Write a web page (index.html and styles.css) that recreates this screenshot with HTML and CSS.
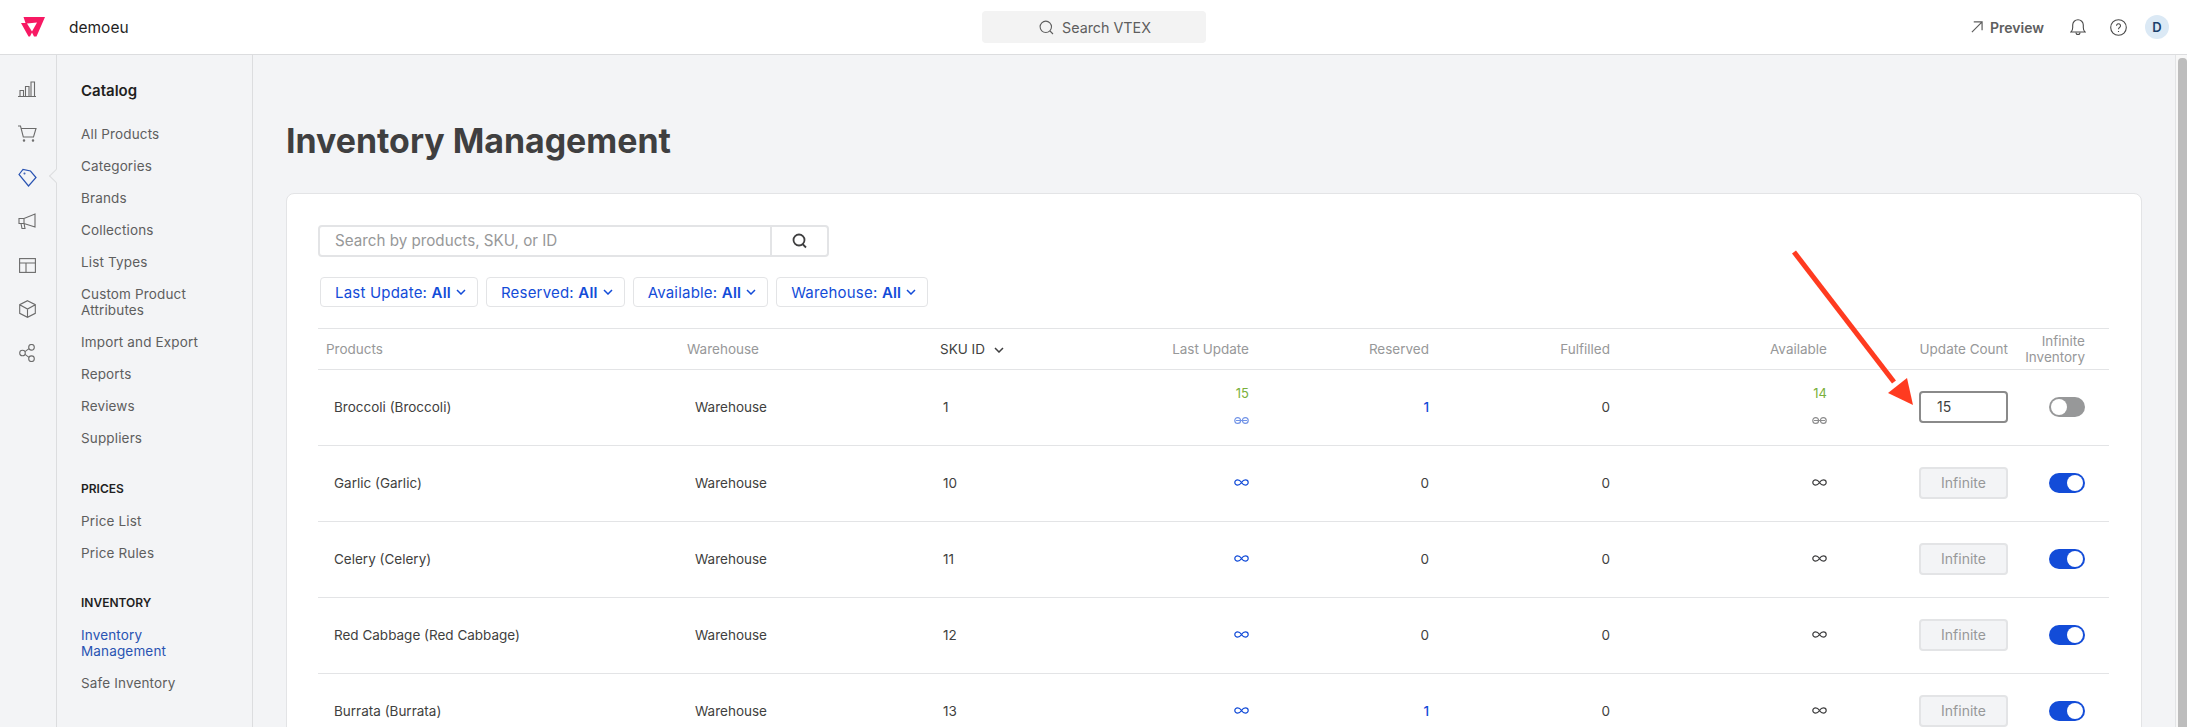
FILE: index.html
```html
<!DOCTYPE html>
<html lang="en">
<head>
    <meta charset="UTF-8">
    <title>Inventory Management</title>
    <link rel="stylesheet" href="styles.css">
</head>
<body>
    <svg class="defs" width="0" height="0">
        <symbol id="inf" viewBox="0 0 15 7">
            <path d="M7.5 3.5C6.3 1.6 5.2.8 3.6.8 2 .8.8 2 .8 3.5s1.2 2.7 2.8 2.7c1.6 0 2.7-.8 3.9-2.7 1.2-1.9 2.3-2.7 3.9-2.7 1.6 0 2.8 1.2 2.8 2.7s-1.2 2.7-2.8 2.7c-1.6 0-2.7-.8-3.9-2.7z" fill="none" stroke="currentColor" stroke-width="1.2"/>
        </symbol>
        <symbol id="inf-off" viewBox="0 0 15 7">
            <circle cx="3.7" cy="3.5" r="2.9" fill="none" stroke="currentColor" stroke-width="1.2"/>
            <circle cx="11.3" cy="3.5" r="2.9" fill="none" stroke="currentColor" stroke-width="1.2"/>
            <path d="M2 3.5h11" stroke="currentColor" stroke-width="1"/>
        </symbol>
    </svg>

    <header class="topbar">
        <div class="topbar-left">
            <svg class="logo" width="24" height="20" viewBox="0 0 24 20">
                <path d="M2.500 0H24l-8.500 19.500H13l-2-4-2 4H7.500L0 6h4.500z" fill="#f71963"/>
                <path d="M6 6.500l10-1-5 9z" fill="#fff"/>
            </svg>
            <span class="account">demoeu</span>
        </div>
        <div class="global-search">
            <svg width="15" height="15" viewBox="0 0 15 15" fill="none" stroke="#5e5e5e" stroke-width="1.100">
                <circle cx="6.800" cy="6.800" r="5.700"/>
                <path d="M11 11l3 3"/>
            </svg>
            <span>Search VTEX</span>
        </div>
        <div class="topbar-right">
            <span class="preview">
                <svg width="12" height="12" viewBox="0 0 13 13" fill="none" stroke="#5e5e5e" stroke-width="1.300">
                    <path d="M1 12L12 1M3 1h9v9"/>
                </svg>
                Preview
            </span>
            <svg class="bell" width="16" height="18" viewBox="0 0 16 18" fill="none" stroke="#4a4a4a" stroke-width="1.100">
                <path d="M1 14c1.200-1 1.700-2 1.700-4.500V7a5.300 5.300 0 0 1 10.600 0v2.500c0 2.500.5 3.500 1.700 4.500z"/>
                <path d="M6 14.500a2 2 0 0 0 4 0"/>
            </svg>
            <svg class="help" width="17" height="17" viewBox="0 0 17 17" fill="none" stroke="#4a4a4a" stroke-width="1.100">
                <circle cx="8.500" cy="8.500" r="7.800"/>
                <path d="M6.500 6.700a2 2 0 1 1 3 1.800c-.7.400-1 .8-1 1.700"/>
                <path d="M8.500 12v1"/>
            </svg>
            <span class="avatar">D</span>
        </div>
    </header>

    <div class="layout">
        <nav class="rail">
            <div class="rail-item">
                <svg width="18" height="16" viewBox="0 0 18 16" fill="none" stroke="#6b6b6b" stroke-width="1.100">
                    <path d="M0 15.500h18M2 15V9.500h3.500V15M7.500 15V5.500H11V15M13 15V1h3.500v14"/>
                </svg>
            </div>
            <div class="rail-item">
                <svg width="19" height="17" viewBox="0 0 19 17" fill="none" stroke="#6b6b6b" stroke-width="1.100">
                    <path d="M0 1h2.500l2.800 11h10.200L18 3.500H3.500"/>
                    <circle cx="6" cy="15.500" r=".7"/>
                    <circle cx="15" cy="15.500" r=".7"/>
                </svg>
            </div>
            <div class="rail-item active">
                <svg width="19" height="19" viewBox="0 0 19 19" fill="none" stroke="#2953b2" stroke-width="1.200">
                    <path d="M1 6.500L5 1.500l7.500 1.500 5.500 6.500-7.500 8.500z"/>
                    <circle cx="6.500" cy="5.500" r=".4"/>
                </svg>
            </div>
            <div class="rail-item">
                <svg width="18" height="17" viewBox="0 0 18 17" fill="none" stroke="#6b6b6b" stroke-width="1.100">
                    <path d="M1 5.500h5L17 1v13L6 10.500H1zM6 5.500v5M3 10.500l1 5h3l-1-5"/>
                </svg>
            </div>
            <div class="rail-item">
                <svg width="17" height="15" viewBox="0 0 17 15" fill="none" stroke="#6b6b6b" stroke-width="1.100">
                    <rect x=".6" y=".6" width="15.800" height="13.800"/>
                    <path d="M.6 5h15.800M7 5v9.400"/>
                </svg>
            </div>
            <div class="rail-item">
                <svg width="17" height="18" viewBox="0 0 17 18" fill="none" stroke="#6b6b6b" stroke-width="1.100">
                    <path d="M8.500.7l7.800 4v8.600l-7.800 4-7.800-4V4.700zM.7 4.700l7.800 4.300 7.800-4.300M8.500 9v8.300"/>
                </svg>
            </div>
            <div class="rail-item">
                <svg width="16" height="18" viewBox="0 0 16 18" fill="none" stroke="#6b6b6b" stroke-width="1.100">
                    <circle cx="3.500" cy="9" r="2.800"/>
                    <circle cx="12.500" cy="3.300" r="2.800"/>
                    <circle cx="12.500" cy="14.700" r="2.800"/>
                    <path d="M6 7.600l4-3M6 10.400l4 3"/>
                </svg>
            </div>
        </nav>

        <aside class="sidenav">
            <h2 class="sidenav-title">Catalog</h2>
            <ul class="sidenav-list">
                <li>All Products</li>
                <li>Categories</li>
                <li>Brands</li>
                <li>Collections</li>
                <li>List Types</li>
                <li>Custom Product Attributes</li>
                <li>Import and Export</li>
                <li>Reports</li>
                <li>Reviews</li>
                <li>Suppliers</li>
            </ul>
            <h3 class="sidenav-section">PRICES</h3>
            <ul class="sidenav-list">
                <li>Price List</li>
                <li>Price Rules</li>
            </ul>
            <h3 class="sidenav-section">INVENTORY</h3>
            <ul class="sidenav-list">
                <li class="current">Inventory Management</li>
                <li>Safe Inventory</li>
            </ul>
        </aside>

        <main class="content">
            <h1 class="page-title">Inventory Management</h1>

            <section class="card">
                <div class="searchbar">
                    <div class="searchbar-input">Search by products, SKU, or ID</div>
                    <div class="searchbar-btn">
                        <svg width="16" height="16" viewBox="0 0 16 16" fill="none" stroke="#3f3f40" stroke-width="1.800">
                            <circle cx="7" cy="7" r="5.500"/>
                            <path d="M10.500 11l3.500 3.500"/>
                        </svg>
                    </div>
                </div>

                <div class="filters">
                    <button class="filter">Last Update: <b>All</b><svg width="10" height="6" viewBox="0 0 10 6"><path d="M1 1l4 4 4-4" fill="none" stroke="currentColor" stroke-width="1.500"/></svg></button>
                    <button class="filter">Reserved: <b>All</b><svg width="10" height="6" viewBox="0 0 10 6"><path d="M1 1l4 4 4-4" fill="none" stroke="currentColor" stroke-width="1.500"/></svg></button>
                    <button class="filter">Available: <b>All</b><svg width="10" height="6" viewBox="0 0 10 6"><path d="M1 1l4 4 4-4" fill="none" stroke="currentColor" stroke-width="1.500"/></svg></button>
                    <button class="filter">Warehouse: <b>All</b><svg width="10" height="6" viewBox="0 0 10 6"><path d="M1 1l4 4 4-4" fill="none" stroke="currentColor" stroke-width="1.500"/></svg></button>
                </div>

                <table class="inventory">
                    <colgroup>
                        <col class="c-product"><col class="c-warehouse"><col class="c-sku"><col class="c-update">
                        <col class="c-reserved"><col class="c-fulfilled"><col class="c-available"><col class="c-count"><col class="c-toggle">
                    </colgroup>
                    <thead>
                        <tr>
                            <th>Products</th>
                            <th>Warehouse</th>
                            <th class="sort">SKU ID<svg width="10" height="6" viewBox="0 0 10 6"><path d="M1 1l4 4 4-4" fill="none" stroke="currentColor" stroke-width="1.500"/></svg></th>
                            <th class="num">Last Update</th>
                            <th class="num">Reserved</th>
                            <th class="num">Fulfilled</th>
                            <th class="num">Available</th>
                            <th class="num">Update Count</th>
                            <th class="num toggle-col">Infinite<br>Inventory</th>
                        </tr>
                    </thead>
                    <tbody>
                        <tr>
                            <td class="indent">Broccoli (Broccoli)</td>
                            <td class="indent">Warehouse</td>
                            <td class="sku">1</td>
                            <td class="num"><div class="new-value">15</div><svg class="inf blue faded"><use href="#inf-off"/></svg></td>
                            <td class="num link">1</td>
                            <td class="num">0</td>
                            <td class="num"><div class="new-value">14</div><svg class="inf faded"><use href="#inf-off"/></svg></td>
                            <td class="num"><div class="count-input active">15</div></td>
                            <td class="num toggle-col"><span class="toggle"></span></td>
                        </tr>
                        <tr>
                            <td class="indent">Garlic (Garlic)</td>
                            <td class="indent">Warehouse</td>
                            <td class="sku">10</td>
                            <td class="num"><svg class="inf blue"><use href="#inf"/></svg></td>
                            <td class="num">0</td>
                            <td class="num">0</td>
                            <td class="num"><svg class="inf"><use href="#inf"/></svg></td>
                            <td class="num"><div class="count-input">Infinite</div></td>
                            <td class="num toggle-col"><span class="toggle on"></span></td>
                        </tr>
                        <tr>
                            <td class="indent">Celery (Celery)</td>
                            <td class="indent">Warehouse</td>
                            <td class="sku">11</td>
                            <td class="num"><svg class="inf blue"><use href="#inf"/></svg></td>
                            <td class="num">0</td>
                            <td class="num">0</td>
                            <td class="num"><svg class="inf"><use href="#inf"/></svg></td>
                            <td class="num"><div class="count-input">Infinite</div></td>
                            <td class="num toggle-col"><span class="toggle on"></span></td>
                        </tr>
                        <tr>
                            <td class="indent">Red Cabbage (Red Cabbage)</td>
                            <td class="indent">Warehouse</td>
                            <td class="sku">12</td>
                            <td class="num"><svg class="inf blue"><use href="#inf"/></svg></td>
                            <td class="num">0</td>
                            <td class="num">0</td>
                            <td class="num"><svg class="inf"><use href="#inf"/></svg></td>
                            <td class="num"><div class="count-input">Infinite</div></td>
                            <td class="num toggle-col"><span class="toggle on"></span></td>
                        </tr>
                        <tr>
                            <td class="indent">Burrata (Burrata)</td>
                            <td class="indent">Warehouse</td>
                            <td class="sku">13</td>
                            <td class="num"><svg class="inf blue"><use href="#inf"/></svg></td>
                            <td class="num link">1</td>
                            <td class="num">0</td>
                            <td class="num"><svg class="inf"><use href="#inf"/></svg></td>
                            <td class="num"><div class="count-input">Infinite</div></td>
                            <td class="num toggle-col"><span class="toggle on"></span></td>
                        </tr>
                    </tbody>
                </table>
            </section>
        </main>

        <div class="scrollbar"><div class="scrollbar-thumb"></div></div>
    </div>

    <!-- annotation on top of the screenshot -->
    <svg class="arrow" width="140" height="170" viewBox="0 0 140 170">
        <path d="M4 2L104 132" stroke="#ff3b20" stroke-width="5" fill="none"/>
        <path d="M123 155L117 128 98 143z" fill="#ff3b20"/>
    </svg>
</body>
</html>
```

FILE: styles.css
```css
html, body {
    height: 100%;
    margin: 0;
    overflow: hidden;
}

body {
    background-color: #ffffff;
    color: #3f3f40;
    font-family: "Inter", "Liberation Sans", sans-serif;
    font-size: 14px;
}

.defs {
    position: absolute;
}

/* top bar */
.topbar {
    display: grid;
    grid-template-columns: 1fr 224px 1fr;
    align-items: center;
    height: 54px;
    border-bottom: 1px solid #dcdddf;
}
.topbar-left {
    display: flex;
    align-items: center;
    padding-left: 21px;
}
.topbar-left > .account {
    margin-left: 24px;
    color: #1f1f1f;
    font-size: 15.5px;
}
.global-search {
    display: flex;
    justify-content: center;
    align-items: center;
    height: 32px;
    padding-left: 3px;
    border-radius: 4px;
    background-color: #f3f3f3;
    color: #5e5e5e;
    font-size: 14.3px;
}
.global-search > svg {
    margin-right: 8px;
}
.topbar-right {
    display: flex;
    justify-content: flex-end;
    align-items: center;
    padding-right: 18px;
}
.preview {
    display: flex;
    align-items: center;
    gap: 7px;
    margin-right: 26px;
    color: #5e5e5e;
    font-size: 14px;
    font-weight: 600;
}
.bell {
    margin-right: 24px;
}
.help {
    margin-right: 18px;
}
.avatar {
    display: flex;
    justify-content: center;
    align-items: center;
    width: 24px;
    height: 24px;
    border-radius: 50%;
    background-color: #dbe9f5;
    color: #1a3f6b;
    font-size: 13px;
    font-weight: 600;
}

/* page columns */
.layout {
    display: flex;
    height: calc(100vh - 55px);
    background-color: #f3f4f6;
}

.rail {
    display: flex;
    flex-direction: column;
    flex: none;
    width: 56px;
    padding-top: 12px;
    border-right: 1px solid #dcdddf;
}
.rail-item {
    position: relative;
    display: flex;
    justify-content: center;
    align-items: center;
    height: 44px;
    padding-right: 2px;
}
.rail-item.active::after {
    content: "";
    position: absolute;
    top: 16px;
    right: -5px;
    width: 9px;
    height: 9px;
    border-left: 1px solid #dcdddf;
    border-bottom: 1px solid #dcdddf;
    background-color: #f3f4f6;
    transform: rotate(45deg);
}

.sidenav {
    flex: none;
    width: 171px;
    padding: 28px 0 0 24px;
    border-right: 1px solid #dcdddf;
}
.sidenav-title {
    margin: 0 0 19px;
    color: #1f1f1f;
    font-size: 15px;
    font-weight: 600;
    line-height: 16px;
}
.sidenav-section {
    margin: 26.5px 0 8px;
    color: #1f1f1f;
    font-size: 12px;
    font-weight: 600;
    line-height: 16px;
}
.sidenav-list {
    margin: 0;
    padding: 0;
    list-style: none;
}
.sidenav-list > li {
    max-width: 130px;
    padding: 8px 0;
    color: #5e5e5e;
    font-size: 13.5px;
    line-height: 16px;
    letter-spacing: 0.15px;
}
.sidenav-list > li.current {
    color: #2953b2;
}

.content {
    flex: 1;
    min-width: 0;
    padding: 64px 33px 0;
}
.page-title {
    margin: 0 0 30px;
    color: #3f3f40;
    font-size: 33.9px;
    font-weight: 700;
    line-height: 44px;
}

/* card */
.card {
    padding: 31px 32px 0 31px;
    border: 1px solid #e3e4e6;
    border-radius: 8px;
    background-color: #ffffff;
}
.searchbar {
    display: flex;
    width: 511px;
    height: 32px;
}
.searchbar-input {
    flex: 1;
    padding-left: 15px;
    border: 2px solid #e3e4e6;
    border-radius: 4px 0 0 4px;
    color: #979899;
    font-size: 15.2px;
    line-height: 28px;
}
.searchbar-btn {
    display: flex;
    justify-content: center;
    align-items: center;
    width: 55px;
    border: 2px solid #e3e4e6;
    border-left: 0;
    border-radius: 0 4px 4px 0;
}

.filters {
    display: flex;
    gap: 8px;
    margin: 20px 0 21px 2px;
}
.filter {
    display: flex;
    align-items: center;
    height: 30px;
    padding: 0 11px 0 14px;
    border: 1px solid #e3e4e6;
    border-radius: 4px;
    background-color: #ffffff;
    color: #134cd8;
    font-family: inherit;
    font-size: 15px;
    letter-spacing: 0.2px;
    white-space: pre;
}
.filter > b {
    font-weight: 600;
}
.filter > svg {
    margin-left: 5px;
}

/* table */
.inventory {
    width: 1791px;
    border-collapse: collapse;
    table-layout: fixed;
}
.c-product { width: 361px; }
.c-warehouse { width: 253px; }
.c-sku { width: 125px; }
.c-update { width: 200px; }
.c-reserved { width: 180px; }
.c-fulfilled { width: 181px; }
.c-available { width: 217px; }
.c-count { width: 181px; }
.c-toggle { width: 93px; }

.inventory th {
    height: 40px;
    padding: 0 8px;
    border-top: 1px solid #e3e4e6;
    border-bottom: 1px solid #e3e4e6;
    color: #979899;
    font-size: 13.5px;
    font-weight: 400;
    line-height: 16px;
    text-align: left;
}
.inventory th.sort {
    color: #3f3f40;
}
.inventory th.sort > svg {
    margin-left: 9px;
    vertical-align: 1px;
}
.inventory td {
    height: 73px;
    padding: 0 8px 2px;
    border-bottom: 1px solid #e3e4e6;
    font-size: 13.5px;
}
.inventory td.indent {
    padding-left: 16px;
}
.inventory td.sku {
    padding-left: 11px;
}
.inventory .num {
    text-align: right;
}
.inventory .toggle-col {
    padding-right: 24px;
}
.inventory td.link {
    color: #134cd8;
    font-weight: 500;
}

.new-value {
    margin-bottom: 16px;
    color: #79b03a;
    font-size: 13px;
    line-height: 16px;
}
.inf {
    display: block;
    width: 15px;
    height: 7px;
    margin-left: auto;
    color: #3f3f40;
}
.inf.blue {
    color: #134cd8;
}
.inf.faded {
    margin-bottom: 5px;
    opacity: 0.6;
}

.count-input {
    box-sizing: border-box;
    width: 89px;
    height: 32px;
    margin-left: auto;
    padding-left: 0;
    border: 2px solid #e3e4e6;
    border-radius: 4px;
    background-color: #f3f4f6;
    color: #979899;
    font-size: 14px;
    line-height: 28px;
    text-align: center;
}
.count-input.active {
    padding-left: 16px;
    border-color: #8a8a8a;
    background-color: #ffffff;
    color: #3f3f40;
    text-align: left;
}

.toggle {
    position: relative;
    display: inline-block;
    width: 36px;
    height: 20px;
    border-radius: 10px;
    background-color: #979899;
    vertical-align: middle;
}
.toggle::after {
    content: "";
    position: absolute;
    top: 2px;
    left: 2px;
    width: 16px;
    height: 16px;
    border-radius: 50%;
    background-color: #ffffff;
}
.toggle.on {
    background-color: #134cd8;
}
.toggle.on::after {
    left: 18px;
}

.scrollbar {
    flex: none;
    width: 11px;
    border-left: 1px solid #e3e4e6;
    background-color: #f7f7f7;
}
.scrollbar-thumb {
    width: 9px;
    height: 100%;
    margin: 3px 0 0 2px;
    border-radius: 4px 4px 0 0;
    background-color: #bdbdbd;
}

/* red arrow annotation */
.arrow {
    position: absolute;
    top: 250px;
    left: 1790px;
}
```
